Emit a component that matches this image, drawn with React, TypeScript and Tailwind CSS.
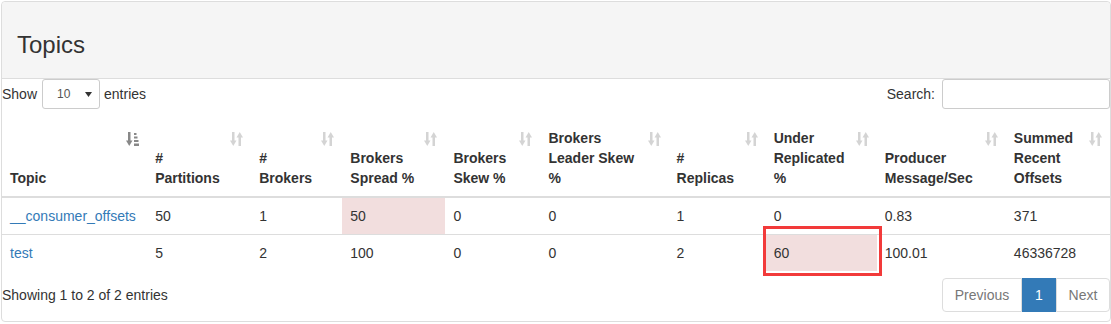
const SortIcon = ({ active }: { active?: boolean }) => (
  <svg width="13" height="14" viewBox="0 0 13 14" className="absolute right-2 top-3" fill={active ? "#888" : "#d4d4d4"}>
    {/* down arrow */}
    <rect x="2" y="0" width="2.5" height="9" />
    <polygon points="0,8.5 6.5,8.5 3.25,14" />
    {active ? (
      <>
        <rect x="8" y="1" width="2.5" height="2" />
        <rect x="8" y="4.5" width="3.5" height="2" />
        <rect x="8" y="8" width="4.5" height="2" />
        <rect x="8" y="11.5" width="5" height="2.5" />
      </>
    ) : (
      <>
        <rect x="8.5" y="5" width="2.5" height="9" />
        <polygon points="6.5,5.5 13,5.5 9.75,0" />
      </>
    )}
  </svg>
);

const columns = [
  { w: "w-[145px]", lines: ["Topic"], active: true },
  { w: "w-[104px]", lines: ["#", "Partitions"] },
  { w: "w-[91px]", lines: ["#", "Brokers"] },
  { w: "w-[103px]", lines: ["Brokers", "Spread %"] },
  { w: "w-[95px]", lines: ["Brokers", "Skew %"] },
  { w: "w-[128px]", lines: ["Brokers", "Leader Skew", "%"] },
  { w: "w-[97px]", lines: ["#", "Replicas"] },
  { w: "w-[111px]", lines: ["Under", "Replicated", "%"] },
  { w: "w-[129px]", lines: ["Producer", "Message/Sec"] },
  { w: "w-[104px]", lines: ["Summed", "Recent", "Offsets"] },
];

const rows = [
  { topic: "__consumer_offsets", vals: ["50", "1", "50", "0", "0", "1", "0", "0.83", "371"], pink: 2 },
  { topic: "test", vals: ["5", "2", "100", "0", "0", "2", "60", "100.01", "46336728"], pink: 6 },
];

const App = () => {
  return (
    <div className="w-[1111px] h-[324px] bg-white p-px font-['Liberation_Sans',Arial,sans-serif] text-[14px] text-[#333]">
      <div className="w-[1110px] h-[321px] border border-[#ddd] rounded flex flex-col">
        {/* Heading */}
        <div className="h-[77px] bg-[#f5f5f5] border-b border-[#ddd] rounded-t flex items-center pl-[15px] pt-[10px]">
          <h3 className="text-[24px] leading-none">Topics</h3>
        </div>

        {/* Length / filter */}
        <div className="flex justify-between items-center h-[30px]">
          <label className="flex items-center">
            <span>Show</span>
            <span className="ml-[5px] w-[58px] h-[30px] border border-[#ccc] rounded-[3px] flex items-center justify-between pl-[14px] pr-[7px] text-[12px] text-[#555]">
              10
              <svg width="7" height="5" viewBox="0 0 7 5"><polygon points="0,0 7,0 3.5,5" fill="#333" /></svg>
            </span>
            <span className="ml-[4px]">entries</span>
          </label>
          <label className="flex items-center">
            <span>Search:</span>
            <span className="ml-[7px] w-[168px] h-[30px] border border-[#ccc] rounded-[3px]" />
          </label>
        </div>

        {/* Table */}
        <table className="table-fixed w-[1108px] mt-[11px] border-collapse">
          <colgroup>
            {columns.map((c, i) => (
              <col key={i} className={c.w} />
            ))}
          </colgroup>
          <thead>
            <tr>
              {columns.map((c, i) => (
                <th key={i} className="relative text-left align-bottom font-bold leading-5 p-2 border-b-2 border-[#ddd]">
                  {c.lines.map((l, j) => (
                    <div key={j} className="whitespace-nowrap">{l}</div>
                  ))}
                  <SortIcon active={c.active} />
                </th>
              ))}
            </tr>
          </thead>
          <tbody>
            {rows.map((r, ri) => (
              <tr key={ri} className={ri > 0 ? "border-t border-[#ddd]" : ""}>
                <td className="p-2 leading-5">
                  <a className="text-[#337ab7]">{r.topic}</a>
                </td>
                {r.vals.map((v, vi) => (
                  <td key={vi} className={`p-2 leading-5 ${vi === r.pink ? "bg-[#f2dede]" : ""} ${ri === 1 && vi === 6 ? "relative" : ""}`}>
                    {v}
                    {ri === 1 && vi === 6 && (
                      <span className="absolute left-[-3px] top-[-9px] w-[119px] h-[50px] border-[3px] border-[#f23a3a]" />
                    )}
                  </td>
                ))}
              </tr>
            ))}
          </tbody>
        </table>

        {/* Info / paging */}
        <div className="flex justify-between items-center mt-[7px]">
          <div>Showing 1 to 2 of 2 entries</div>
          <div className="flex h-[34px]">
            <span className="w-[80px] flex items-center justify-center border border-[#ddd] rounded-l text-[#777]">Previous</span>
            <span className="w-[34px] flex items-center justify-center bg-[#337ab7] border border-[#337ab7] text-white">1</span>
            <span className="w-[54px] flex items-center justify-center border border-[#ddd] rounded-r text-[#777]">Next</span>
          </div>
        </div>
      </div>
    </div>
  );
};

export default App;
